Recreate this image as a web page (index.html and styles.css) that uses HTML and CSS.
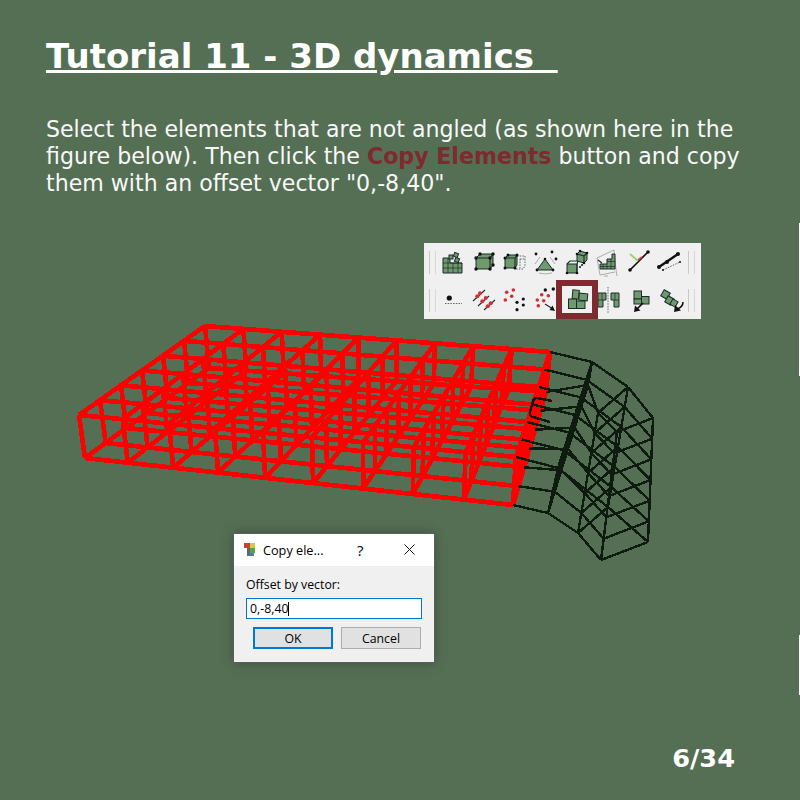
FILE: index.html
```html
<!DOCTYPE html>
<html lang="en">
<head>
    <meta charset="UTF-8">
    <title>Tutorial 11 - 3D dynamics</title>
    <link rel="stylesheet" href="styles.css">
</head>
<body>
    <div class="slide">
        <h1 class="title">Tutorial 11 - 3D dynamics&nbsp;&nbsp;</h1>
        <p class="intro">Select the elements that are not angled (as shown here in the figure below). Then click the <b class="accent">Copy Elements</b> button and copy them with an offset vector "0,-8,40".</p>

        <svg class="mesh" viewBox="0 0 800 800">
            <path id="meshRed" class="mesh-red"/>
            <path id="meshDark" class="mesh-dark"/>
            <path class="mesh-dark" d="M552 401 L537 398 Q534 398 533 401 L530 412 Q529 416 533 417 L550 422"/>
        </svg>

        <div class="toolbar">
            <div class="tool-row">
                <span class="grip"></span>
                <svg class="tool" viewBox="0 0 24 24">
                    <path class="cell" d="M2 8H9V13H21V23H2Z"/>
                    <path class="thin" d="M2 13H21M2 18H21M7 8V23M12 13V23M17 13V23"/>
                    <rect class="cell" x="8" y="5" width="4" height="4"/>
                    <rect class="cell" x="13" y="3" width="4" height="4" transform="rotate(20 15 5)"/>
                    <rect class="cell" x="14" y="8" width="4" height="4" transform="rotate(20 16 10)"/>
                </svg>
                <svg class="tool" viewBox="0 0 24 24">
                    <path class="cell" d="M4 8L8 4H21V15L18 19H4Z"/>
                    <path class="line" d="M4 8H18V19M18 8L21 4"/>
                    <circle class="node" cx="4" cy="8" r="1.7"/><circle class="node" cx="8" cy="4" r="1.7"/><circle class="node" cx="21" cy="4" r="1.7"/><circle class="node" cx="18" cy="8" r="1.7"/>
                    <circle class="node" cx="4" cy="19" r="1.7"/><circle class="node" cx="18" cy="19" r="1.7"/><circle class="node" cx="21" cy="15" r="1.7"/>
                </svg>
                <svg class="tool" viewBox="0 0 24 24">
                    <path class="cell" d="M2 8L5 5H14V15L12 18H2Z"/>
                    <path class="line" d="M2 8H12V18M12 8L14 5"/>
                    <path class="dash" d="M14 6H22V16L20 19H13M17 9H22M17 9V18"/>
                    <circle class="node" cx="2" cy="8" r="1.5"/><circle class="node" cx="5" cy="5" r="1.5"/><circle class="node" cx="14" cy="5" r="1.5"/><circle class="node" cx="2" cy="18" r="1.5"/><circle class="node" cx="12" cy="18" r="1.5"/>
                </svg>
                <svg class="tool" viewBox="0 0 24 24">
                    <path class="cell" d="M11 9L19 20H3Z"/>
                    <path class="thin-grey" d="M5 23Q11 25 18 23M1 14L6 7M21 14L16 7"/>
                    <circle class="node" cx="2" cy="4" r="1.4"/><circle class="node" cx="18" cy="2" r="1.4"/><circle class="node" cx="22" cy="9" r="1.4"/>
                    <circle class="node" cx="11" cy="9" r="1.3"/><circle class="node" cx="3" cy="20" r="1.4"/><circle class="node" cx="19" cy="20" r="1.4"/>
                </svg>
                <svg class="tool" viewBox="0 0 24 24">
                    <rect class="cell" x="2" y="14" width="10" height="9"/>
                    <path class="line" d="M2 14L5 11H13L12 14M12 23V14"/>
                    <path class="cell" d="M12 4L15 1L22 3V10L19 13L12 11Z"/>
                    <path class="line" d="M12 4L19 6V13M19 6L22 3"/>
                    <circle class="node" cx="12" cy="4" r="1.3"/><circle class="node" cx="15" cy="1" r="1.3"/><circle class="node" cx="22" cy="3" r="1.3"/><circle class="node" cx="19" cy="13" r="1.3"/><circle class="node" cx="15" cy="17" r="1"/><circle class="node" cx="17" cy="15" r="1"/>
                    <circle class="node" cx="2" cy="23" r="1.3"/><circle class="node" cx="12" cy="23" r="1.3"/>
                </svg>
                <svg class="tool" viewBox="0 0 24 24">
                    <path class="thin-grey" d="M1 8L18 0L20 20L21 26M1 8L4 25L19 22M8 26H12"/>
                    <path class="cell" d="M4 14H11V9H16V4H19V19H4Z"/>
                    <path class="thin" d="M4 16.5H19M7 14V19M11 14V19M15 9V19M11 11.5H19"/>
                    <path class="line" d="M2 10L6 13"/>
                </svg>
                <svg class="tool" viewBox="0 0 24 24">
                    <path class="line-bold" d="M3 20L21 2"/>
                    <path class="axis-green" d="M3 4L11 11"/>
                    <path class="axis-red" d="M11 10L15 7"/>
                    <circle class="node" cx="3" cy="20" r="1.8"/><circle class="node" cx="21" cy="2" r="1.8"/>
                </svg>
                <svg class="tool" viewBox="0 0 24 24">
                    <path class="line-heavy" d="M1 17L20 4"/>
                    <circle class="node" cx="1" cy="17" r="2"/><circle class="node" cx="9" cy="12" r="2"/><circle class="node" cx="20" cy="4" r="2"/>
                    <path class="dash" d="M5 20L22 12"/>
                    <circle class="node" cx="5" cy="20" r="1"/><circle class="node" cx="22" cy="12" r="1"/>
                </svg>
                <span class="grip grip-end"></span>
            </div>
            <div class="tool-row">
                <span class="grip"></span>
                <svg class="tool" viewBox="0 0 24 24">
                    <circle class="node" cx="8.3" cy="10" r="2.6"/>
                    <path class="dash" d="M4 15.5H21"/>
                </svg>
                <svg class="tool" viewBox="0 0 24 24">
                    <path class="line" d="M1 13L13 2M6 18L17 8M12 22L23 12"/>
                    <circle class="dot-red" cx="8" cy="5.3" r="2"/><circle class="dot-red" cx="5.3" cy="8.3" r="2"/><circle class="dot-red" cx="13.7" cy="10" r="2"/><circle class="dot-red" cx="10.3" cy="13.3" r="2"/><circle class="dot-red" cx="18.7" cy="15.3" r="2"/><circle class="dot-red" cx="15.7" cy="18.3" r="2"/>
                </svg>
                <svg class="tool" viewBox="0 0 24 24">
                    <circle class="dot-red" cx="3.7" cy="4.3" r="1.8"/><circle class="dot-red" cx="10.3" cy="2" r="1.8"/><circle class="dot-red" cx="8.7" cy="8.3" r="1.8"/><circle class="dot-red" cx="2.3" cy="12" r="1.8"/>
                    <circle class="node" cx="20.3" cy="11" r="1.6"/><circle class="node" cx="14" cy="14.3" r="1.6"/><circle class="node" cx="20.3" cy="17" r="1.6"/><circle class="node" cx="14" cy="21.7" r="1.6"/>
                </svg>
                <svg class="tool" viewBox="0 0 24 24">
                    <circle class="dot-red" cx="7.7" cy="6.7" r="1.8"/><circle class="dot-red" cx="14.3" cy="7.7" r="1.8"/><circle class="dot-red" cx="3.3" cy="12" r="1.8"/><circle class="dot-red" cx="9.7" cy="12.7" r="1.8"/><circle class="dot-red" cx="4.3" cy="17.7" r="1.8"/>
                    <circle class="node" cx="11.3" cy="2" r="1.7"/><circle class="node" cx="19.3" cy="1" r="1.7"/>
                    <path class="line" d="M11 16L19 21"/>
                    <path class="node" d="M21 23L15.5 22L18.5 17.5Z"/>
                </svg>
                <svg class="tool" viewBox="0 0 24 24">
                    <rect class="cell" x="7.5" y="2" width="6.5" height="9" transform="rotate(5 10 6)"/>
                    <rect class="cell" x="14" y="5.5" width="8.5" height="7" transform="rotate(5 18 9)"/>
                    <rect class="cell" x="3.5" y="11" width="8" height="9.5"/>
                    <rect class="cell" x="11.5" y="13" width="8.5" height="7.5"/>
                </svg>
                <svg class="tool" viewBox="0 0 24 24">
                    <path class="cell" d="M2 5H10V12H7V19H2Z"/>
                    <path class="thin" d="M2 12H7M6 5V12"/>
                    <path class="cell" d="M15 5H23V19H18V12H15Z"/>
                    <path class="thin" d="M18 12H23M19 5V12"/>
                    <path class="dash" d="M12 -1V25"/>
                </svg>
                <svg class="tool" viewBox="0 0 24 24">
                    <rect class="cell" x="7" y="3" width="7.5" height="8"/>
                    <rect class="cell" x="7" y="11" width="7.5" height="5"/>
                    <rect class="cell" x="14.5" y="8.5" width="7.5" height="7.5"/>
                    <path class="line-bold" d="M16 15L9 22"/>
                    <path class="node" d="M7 24L8 17.5L13.5 22.5Z"/>
                </svg>
                <svg class="tool" viewBox="0 0 24 24">
                    <rect class="cell" x="4" y="3" width="7" height="7" transform="rotate(30 7.5 6.5)"/>
                    <rect class="cell" x="8" y="9" width="7" height="7" transform="rotate(30 11.5 12.5)"/>
                    <rect class="cell" x="13" y="12" width="6" height="6" transform="rotate(30 16 15)"/>
                    <path class="line-curve" d="M25 14Q25 19 19 21"/>
                    <path class="node" d="M16 24L17 17L23 22.5Z"/>
                </svg>
                <span class="grip grip-end"></span>
            </div>
            <span class="tool-mark"></span>
        </div>

        <div class="dialog">
            <div class="dialog-head">
                <svg class="dialog-icon" viewBox="0 0 12 14">
                    <rect class="ic-red" x="0" y="0" width="6" height="5"/>
                    <rect class="ic-yellow" x="6" y="0" width="5" height="5"/>
                    <rect class="ic-green" x="6" y="5" width="5" height="5"/>
                    <rect class="ic-grey" x="3" y="5" width="3" height="8"/>
                    <rect class="ic-blue" x="6" y="10" width="4" height="3"/>
                </svg>
                <span class="dialog-title">Copy ele...</span>
                <span class="dialog-help">?</span>
                <svg class="dialog-close" viewBox="0 0 11 11"><path d="M0.5 0.5L10.5 10.5M10.5 0.5L0.5 10.5"/></svg>
            </div>
            <div class="dialog-body">
                <label class="dialog-label">Offset by vector:</label>
                <div class="dialog-input">0,-8,40<span class="caret"></span></div>
                <div class="dialog-buttons">
                    <span class="btn btn-default">OK</span>
                    <span class="btn">Cancel</span>
                </div>
            </div>
        </div>

        <span class="edge edge-top"></span>
        <span class="edge edge-bottom"></span>

        <div class="page-num">6/34</div>
    </div>

    <script src="mesh.js"></script>
</body>
</html>
```

FILE: styles.css
```css
body {
    margin: 0;
    font-family: "DejaVu Sans", sans-serif;
}
.slide {
    position: relative;
    display: flex;
    flex-direction: column;
    width: 800px;
    height: 800px;
    box-sizing: border-box;
    padding: 34px 46px 26px;
    overflow: hidden;
    background-color: #556f54;
    color: #fff;
}
.title {
    margin: 0 0 38px;
    font-size: 34px;
    line-height: 44px;
    font-weight: bold;
    text-decoration: underline;
}
.intro {
    margin: 0;
    width: 708px;
    font-size: 22.1px;
    line-height: 27px;
    color: #f8f8f8;
}
.accent {
    color: #7e2a2e;
}
.page-num {
    position: relative;
    margin-top: auto;
    text-align: right;
    padding-right: 19px;
    font-size: 25.6px;
    line-height: 32px;
    font-weight: bold;
}

/* mesh */
.mesh {
    position: absolute;
    left: 0;
    top: 0;
    width: 800px;
    height: 800px;
}
.mesh-red {
    fill: none;
    stroke: #ff0000;
    stroke-width: 4.7;
    shape-rendering: crispEdges;
}
.mesh-dark {
    fill: none;
    stroke: #0e1c10;
    stroke-width: 2.4;
    shape-rendering: crispEdges;
}

/* toolbar */
.toolbar {
    position: absolute;
    left: 424px;
    top: 243px;
    width: 277px;
    height: 76px;
    box-sizing: border-box;
    padding-top: 7px;
    display: flex;
    flex-direction: column;
    gap: 14px;
    background-color: #f0f0f0;
}
.tool-row {
    display: flex;
    align-items: center;
    gap: 7px;
    height: 24px;
    padding-left: 5px;
}
.grip {
    width: 7px;
    height: 23px;
    margin-right: -2px;
    box-sizing: border-box;
    border-left: 1px solid #c8c8c8;
    border-right: 1px solid #d8d8d8;
}
.grip-end {
    margin-left: -1px;
    margin-right: 0;
}
.tool {
    width: 24px;
    height: 24px;
    overflow: visible;
    filter: blur(0.45px);
}
.tool-mark {
    position: absolute;
    left: 132px;
    top: 37px;
    width: 42px;
    height: 39px;
    box-sizing: border-box;
    border: 6px solid #7e2a2e;
}
.cell { fill: #6f9a6e; stroke: #1b2a2a; stroke-width: 1; }
.thin { fill: none; stroke: #1b2a2a; stroke-width: 0.7; }
.thin-grey { fill: none; stroke: #9a9a9a; stroke-width: 0.8; }
.line { fill: none; stroke: #1b2a2a; stroke-width: 1.1; }
.line-bold { fill: none; stroke: #111; stroke-width: 1.7; }
.line-heavy { fill: none; stroke: #111; stroke-width: 2.4; }
.line-curve { fill: none; stroke: #111; stroke-width: 1.6; }
.dash { fill: none; stroke: #555; stroke-width: 0.9; stroke-dasharray: 1.5 1.2; }
.node { fill: #111; }
.dot-red { fill: #cf2f35; }
.axis-green { fill: none; stroke: #9bd06a; stroke-width: 1.7; }
.axis-red { fill: none; stroke: #d04040; stroke-width: 1.7; }

/* dialog */
.dialog {
    position: absolute;
    left: 233px;
    top: 533px;
    width: 202px;
    height: 130px;
    box-sizing: border-box;
    border: 1px solid #5c5c5c;
    box-shadow: 0 0 12px rgba(0, 0, 0, 0.28);
    background-color: #f0f0f0;
    font-family: "Open Sans", sans-serif;
    font-size: 12.3px;
    color: #000;
}
.dialog-head {
    position: relative;
    display: flex;
    align-items: center;
    height: 32px;
    padding-left: 10px;
    background-color: #fff;
}
.dialog-icon {
    width: 12px;
    height: 14px;
    margin-right: 7px;
}
.dialog-title {
    font-size: 12.7px;
}
.ic-red { fill: #c8403a; }
.ic-yellow { fill: #d8c83a; }
.ic-green { fill: #5aa04a; }
.ic-grey { fill: #666; }
.ic-blue { fill: #4a80b8; }
.dialog-help {
    position: absolute;
    left: 123px;
    font-size: 15px;
}
.dialog-close {
    position: absolute;
    left: 170px;
    top: 10px;
    width: 11px;
    height: 11px;
    fill: none;
    stroke: #111;
    stroke-width: 1;
}
.dialog-body {
    display: flex;
    flex-direction: column;
    padding: 11px 12px 0;
}
.dialog-label {
    line-height: 16px;
    margin-bottom: 5px;
}
.dialog-input {
    display: flex;
    align-items: center;
    height: 21px;
    box-sizing: border-box;
    padding-left: 3px;
    border: 1px solid #0078d7;
    background-color: #fff;
}
.caret {
    width: 1px;
    height: 14px;
    background-color: #000;
}
.dialog-buttons {
    display: flex;
    gap: 8px;
    margin: 8px 0 0 7px;
}
.btn {
    display: flex;
    align-items: center;
    justify-content: center;
    width: 80px;
    height: 22px;
    box-sizing: border-box;
    border: 1px solid #adadad;
    background-color: #e1e1e1;
}
.btn-default {
    border: 2px solid #0078d7;
}

/* thin white slivers on the right edge */
.edge {
    position: absolute;
    right: 0;
    width: 1px;
    background-color: #fff;
}
.edge-top {
    top: 223px;
    height: 153px;
}
.edge-bottom {
    top: 635px;
    height: 60px;
}
```

FILE: mesh.js
```js
// corners are [x, y] on screen, j = across the block, k = top/bottom
const cols = 6;
const backFrac = [0, 1, 2, 3, 4, 5, 6, 7, 8, 9].map(i => i / 9);
const frontFrac = [0, .1, .206, .311, .421, .533, .65, .766, .885, 1];

const lerp = (a, b, t) => [a[0] + (b[0] - a[0]) * t, a[1] + (b[1] - a[1]) * t];
const pt = p => p[0].toFixed(1) + ' ' + p[1].toFixed(1);

// straight red block
function redNode(i, j, k) {
    const corners = k === 0
        ? { bl: [205, 326], br: [550, 352], fl: [79, 415], fr: [516, 457] }
        : { bl: [209, 368], br: [546, 392], fl: [85, 458], fr: [513, 505] };
    const t = j / cols;
    const back = lerp(corners.bl, corners.br, backFrac[i]);
    const front = lerp(corners.fl, corners.fr, frontFrac[i]);
    return lerp(back, front, t);
}

// curved dark end, one entry per section
const sections = [
    { a: [550, 352], b: [516, 457], c: [546, 392], d: [513, 505] },
    { a: [592, 362], b: [558, 468], c: [588, 385], d: [548, 513] },
    { a: [628, 387], b: [608, 507], c: [598, 413], d: [578, 533] },
    { a: [653, 418], b: [648, 542], c: [617, 432], d: [601, 560] }
];

function darkNode(i, j, k) {
    const s = sections[i];
    return k === 0 ? lerp(s.a, s.b, j / cols) : lerp(s.c, s.d, j / cols);
}

// first = first section that draws its own cross lines, the red block owns the shared one
function gridPath(node, count, first) {
    let d = '';
    for (let i = 0; i < count; i++) {
        for (let j = 0; j <= cols; j++) {
            for (let k = 0; k < 2; k++) {
                const p = pt(node(i, j, k));
                if (i + 1 < count) d += `M${p}L${pt(node(i + 1, j, k))}`;
                if (j < cols && i >= first) d += `M${p}L${pt(node(i, j + 1, k))}`;
            }
            if (i >= first) d += `M${pt(node(i, j, 0))}L${pt(node(i, j, 1))}`;
        }
    }
    return d;
}

document.getElementById('meshRed').setAttribute('d', gridPath(redNode, 10, 0));
document.getElementById('meshDark').setAttribute('d', gridPath(darkNode, 4, 1));
```
